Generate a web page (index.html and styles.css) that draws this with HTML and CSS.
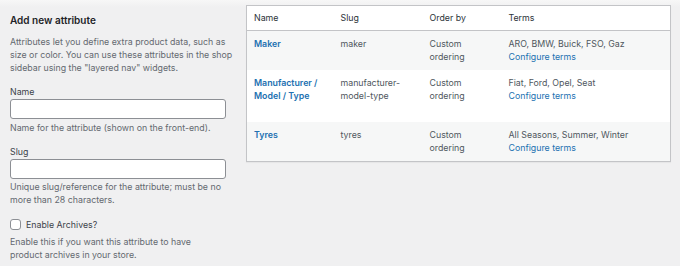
FILE: index.html
```html
<!DOCTYPE html>
<html lang="en">
<head>
<meta charset="utf-8">
<title>Attributes</title>
<link rel="stylesheet" href="styles.css">
</head>
<body>
<div class="wrap">
  <div class="col-left">
    <h2 class="form-title">Add new attribute</h2>
    <p class="desc">Attributes let you define extra product data, such as<br>size or color. You can use these attributes in the shop<br>sidebar using the "layered nav" widgets.</p>
    <div class="field">
      <label class="field-label" for="attr-name">Name</label>
      <input class="text-input" id="attr-name" type="text">
      <p class="help">Name for the attribute (shown on the front-end).</p>
    </div>
    <div class="field">
      <label class="field-label" for="attr-slug">Slug</label>
      <input class="text-input" id="attr-slug" type="text">
      <p class="help">Unique slug/reference for the attribute; must be no<br>more than 28 characters.</p>
    </div>
    <div class="field">
      <label class="check-row" for="attr-archives">
        <input class="checkbox" id="attr-archives" type="checkbox">
        <span>Enable Archives?</span>
      </label>
      <p class="help help-check">Enable this if you want this attribute to have<br>product archives in your store.</p>
    </div>
  </div>
  <div class="col-right">
    <table class="attr-table">
      <colgroup>
        <col class="c-name">
        <col class="c-slug">
        <col class="c-order">
        <col class="c-terms">
      </colgroup>
      <thead>
        <tr>
          <th>Name</th>
          <th>Slug</th>
          <th>Order by</th>
          <th>Terms</th>
        </tr>
      </thead>
      <tbody>
        <tr class="alt">
          <td><a class="row-title" href="#">Maker</a><div class="row-actions"></div></td>
          <td>maker</td>
          <td>Custom ordering</td>
          <td>ARO, BMW, Buick, FSO, Gaz<br><a class="configure" href="#">Configure terms</a></td>
        </tr>
        <tr>
          <td><a class="row-title" href="#">Manufacturer / Model / Type</a><div class="row-actions"></div></td>
          <td>manufacturer-model-type</td>
          <td>Custom ordering</td>
          <td>Fiat, Ford, Opel, Seat<br><a class="configure" href="#">Configure terms</a></td>
        </tr>
        <tr class="alt">
          <td><a class="row-title" href="#">Tyres</a><div class="row-actions"></div></td>
          <td>tyres</td>
          <td>Custom ordering</td>
          <td>All Seasons, Summer, Winter<br><a class="configure" href="#">Configure terms</a></td>
        </tr>
      </tbody>
    </table>
  </div>
</div>
</body>
</html>
```
FILE: styles.css
```css
html {
  background: #f0f0f1;
}
body {
  margin: 0;
  min-height: 266px;
  background: linear-gradient(to bottom, #f7f7f7 0, #f0f0f1 7px) no-repeat, #f0f0f1;
  font-family: Inter, "Liberation Sans", Arial, sans-serif;
  font-size: 8.8px;
  line-height: 13px;
  color: #3c434a;
}
.wrap {
  display: flex;
  gap: 10px;
  padding: 5px 9px 0 10px;
}
.col-left {
  flex: none;
  width: 226px;
}
.col-right {
  flex: 1;
  min-width: 0;
}
.form-title {
  margin: 7.5px 0 0;
  font-size: 10px;
  line-height: 14px;
  font-weight: 600;
  color: #1d2327;
}
.desc {
  margin: 8.5px 0 0;
  color: #646970;
}
.field {
  margin-top: 11px;
}
.field-label {
  display: block;
  margin-bottom: 1px;
  color: #3c434a;
}
.text-input {
  display: block;
  box-sizing: border-box;
  width: 216px;
  height: 20px;
  margin: 0;
  padding: 0 6px;
  border: 1px solid #8c8f94;
  border-radius: 3px;
  background: #fff;
  font: inherit;
}
.help {
  margin: 1.5px 0 0;
  color: #646970;
}
.check-row {
  display: flex;
  align-items: center;
  gap: 5px;
  height: 14px;
  color: #3c434a;
}
.checkbox {
  appearance: none;
  -webkit-appearance: none;
  box-sizing: border-box;
  width: 11px;
  height: 11px;
  margin: 0;
  border: 1px solid #8c8f94;
  border-radius: 3px;
  background: #fff;
}
.help-check {
  margin-top: 3.5px;
}
.attr-table {
  width: 100%;
  table-layout: fixed;
  border-collapse: collapse;
  border: 1px solid #c3c4c7;
  background: #fff;
  box-shadow: 0 1px 1px rgba(0, 0, 0, 0.04);
}
.c-name { width: 87px; }
.c-slug { width: 89px; }
.c-order { width: 79px; }
.attr-table th {
  text-align: left;
  font-weight: 400;
  color: #2c3338;
  padding: 5px 7px 6px;
  border-bottom: 1px solid #c3c4c7;
}
.attr-table td {
  vertical-align: top;
  padding: 5.5px 7px 7.5px;
  color: #50575e;
}
.attr-table tr.alt td {
  background: #f6f7f7;
}
.row-title {
  color: #2271b1;
  font-weight: 600;
  text-decoration: none;
}
.row-actions {
  height: 13px;
}
.configure {
  color: #2271b1;
  text-decoration: none;
}
```
